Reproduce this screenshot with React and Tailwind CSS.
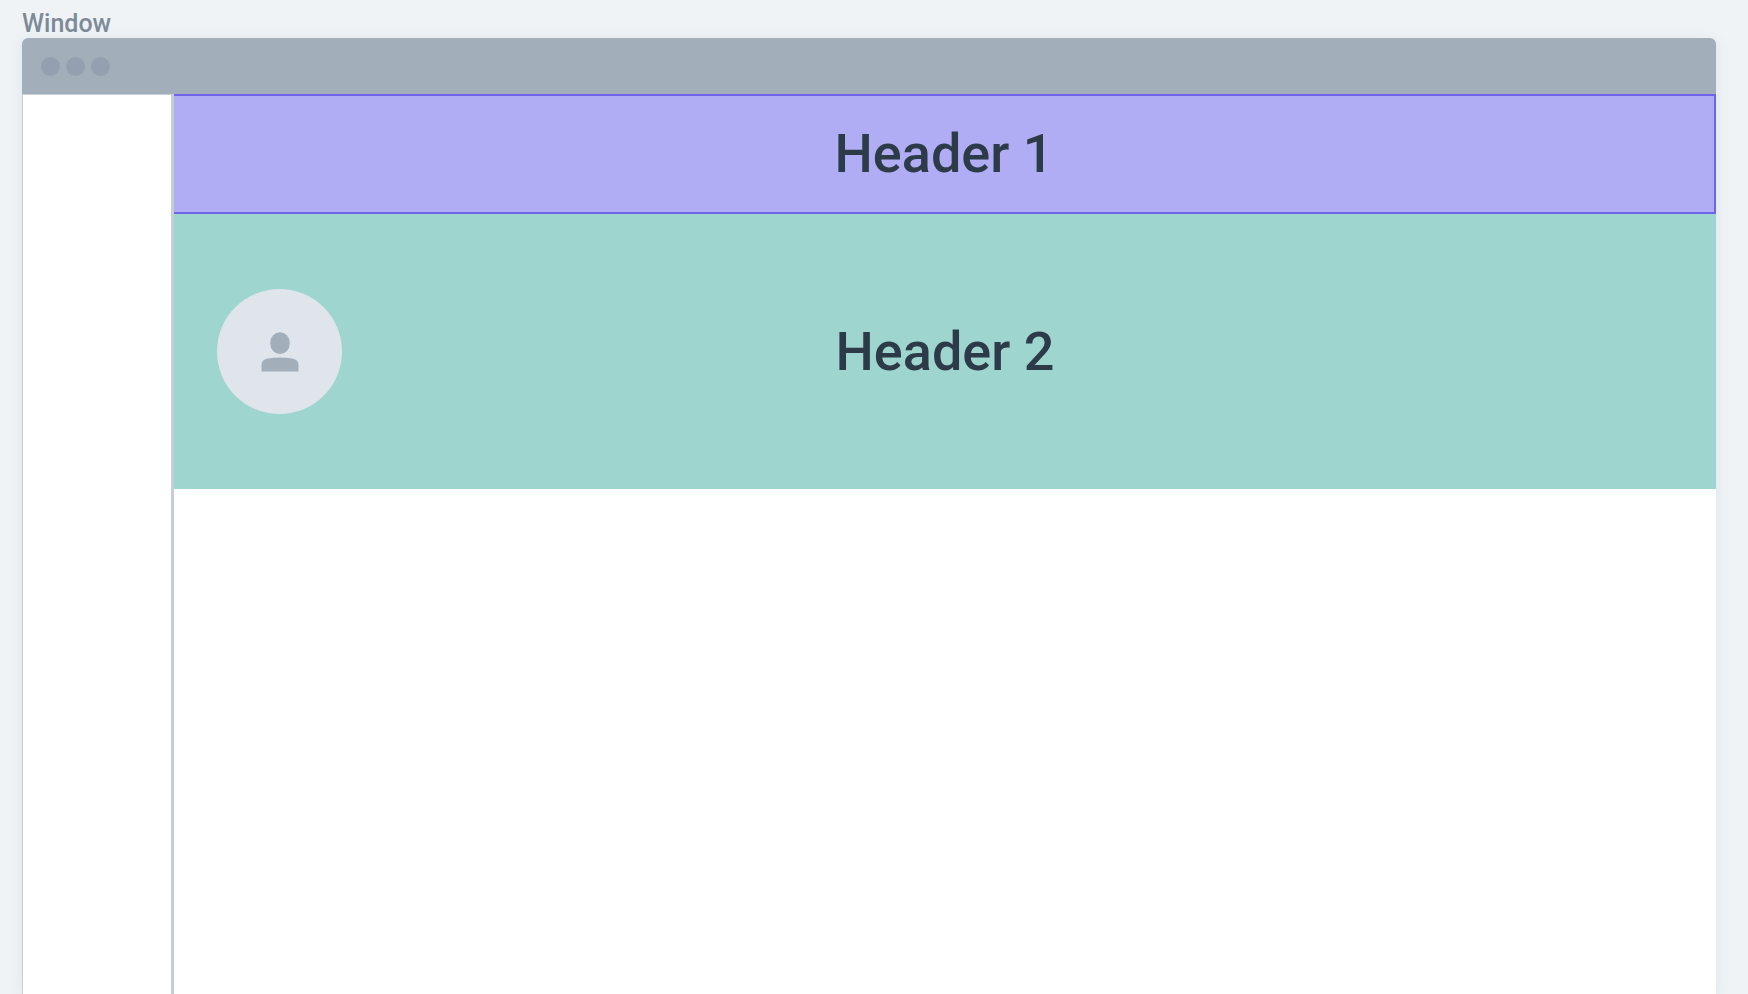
function PersonIcon() {
  return (
    <svg viewBox="0 0 38 40" className="h-10 w-[38px] fill-[#a2aeb9]" aria-hidden="true">
      <rect x="9.3" y="0.3" width="19.4" height="21.7" rx="9.7" ry="10.2" />
      <path d="M0.5 39.5V33C0.5 29.2 2.8 27.4 7 26.6C14.5 25.2 23.5 25.2 31 26.6C35.2 27.4 37.5 29.2 37.5 33V39.5Z" />
    </svg>
  );
}

function TitleBar() {
  return (
    <div className="flex h-14 shrink-0 items-center gap-[6px] rounded-t-md bg-[#a2aeb9] px-[19px]">
      <span className="size-[19px] rounded-full bg-[#949faf]" />
      <span className="size-[19px] rounded-full bg-[#949faf]" />
      <span className="size-[19px] rounded-full bg-[#949faf]" />
    </div>
  );
}

export default function App() {
  return (
    <div className="flex h-screen flex-col overflow-hidden bg-[#eff3f6] pt-[10px] pr-8 pl-[22px] font-['Roboto','Liberation_Sans',sans-serif]">
      <p className="h-7 shrink-0 text-[25px] leading-7 font-medium text-[#7d8b99]">Window</p>
      <section className="flex flex-1 flex-col rounded-t-md bg-white shadow-[0_2px_14px_rgba(80,100,120,0.1)]">
        <TitleBar />
        <div className="flex flex-1">
          <aside className="w-[152px] shrink-0 border-t border-r-[3px] border-l border-t-[#c5cfd8] border-r-[#c4ced7] border-l-[#c5cfd8] bg-white" />
          <main className="flex flex-1 flex-col bg-white">
            <header className="flex h-[120px] items-center justify-center border-y-2 border-r-2 border-[#6f64ea] bg-[#b0adf4]">
              <h1 className="text-[54px] leading-[64px] font-medium text-[#2d3a47]">Header 1</h1>
            </header>
            <header className="grid h-[275px] grid-cols-[1fr_auto_1fr] items-center bg-[#9ed6cf] px-[43px]">
              <div className="flex size-[125px] items-center justify-center rounded-full bg-[#e0e5ec]">
                <PersonIcon />
              </div>
              <h2 className="text-[54px] leading-[64px] font-medium text-[#2d3a47]">Header 2</h2>
            </header>
          </main>
        </div>
      </section>
    </div>
  );
}
